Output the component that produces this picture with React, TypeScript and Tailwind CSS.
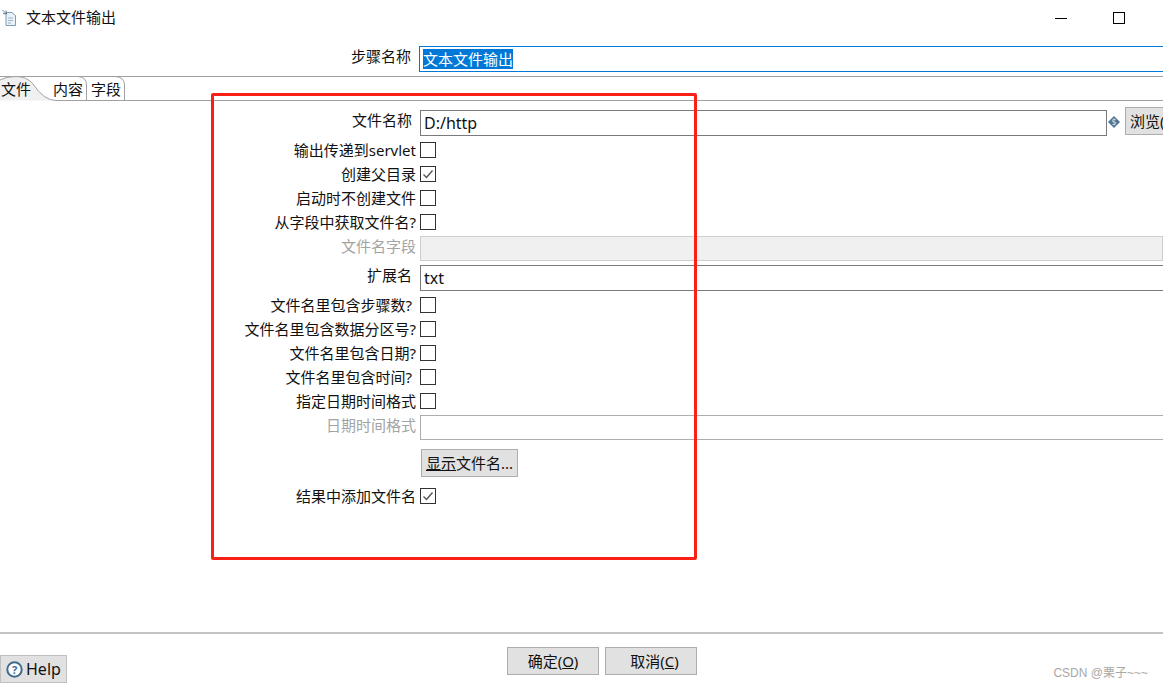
import React from "react";

const fontStack = "font-['Noto_Sans','Noto_Sans_CJK_SC',sans-serif]";

const Label = ({ text }: { text: string }) => (
  <span className="w-[416px] shrink-0 text-right text-[15px] leading-[24px] whitespace-nowrap text-[#111]">
    {text}
  </span>
);

const MutedLabel = ({ text }: { text: string }) => (
  <span className="w-[416px] shrink-0 text-right text-[15px] leading-[20px] whitespace-nowrap text-[#a3a3a3]">
    {text}
  </span>
);

const CheckRow = ({ label, checked }: { label: string; checked?: boolean }) => (
  <div className="flex h-[24px] items-center">
    <Label text={label} />
    <span className="ml-[4px] flex h-[16px] w-[16px] items-center justify-center border border-[#333] bg-white">
      {checked && (
        <svg width="14" height="14" viewBox="0 0 14 14" fill="none">
          <path d="M2.5 7.5 L5.5 10.5 L11.5 3.5" stroke="#555" strokeWidth="1.4" />
        </svg>
      )}
    </span>
  </div>
);

const PageIcon = () => (
  <svg width="16" height="18" viewBox="0 0 16 18" fill="none">
    <path d="M4 3.5 H10 L13.5 6.5 V16.5 H4 Z" fill="#eaf1f7" stroke="#7f9db5" />
    <path d="M6 9 H11 M6 11.5 H11 M6 14 H9" stroke="#9fb6c8" />
    <path d="M0.5 1 L4.5 5 M1 4.5 L4.5 5 L4 1.5" stroke="#5f7f98" strokeWidth="1" />
  </svg>
);

const App = () => {
  return (
    <div className={`relative flex h-[689px] w-[1163px] flex-col overflow-hidden bg-white text-[#111] ${fontStack}`}>
      {/* title bar */}
      <div className="flex h-[46px] shrink-0 items-start">
        <div className="ml-[2px] mt-[9px]">
          <PageIcon />
        </div>
        <span className="ml-[8px] mt-[6px] text-[15px] leading-[22px]">文本文件输出</span>
        <div className="ml-auto mr-[38px] mt-[12px] flex items-center gap-[46px]">
          <span className="h-[1px] w-[12px] bg-black" />
          <span className="h-[12px] w-[12px] border border-black" />
        </div>
      </div>

      {/* step name */}
      <div className="flex h-[26px] shrink-0">
        <span className="w-[411px] text-right text-[15px] leading-[21px]">步骤名称</span>
        <div className="ml-[8px] flex flex-1 items-center border-y border-l border-[#0078d7] pl-[3px]">
          <span className="bg-[#0078d7] text-[15px] leading-[20px] text-white">文本文件输出</span>
        </div>
      </div>

      {/* tabs */}
      <div className="relative mt-[4px] flex h-[25px] shrink-0 border-t border-[#a0a0a0]">
        <svg className="absolute left-0 top-[-1px]" width="1163" height="26" viewBox="0 0 1163 26" fill="none">
          <path d="M0 4 Q6 0.5 16 0.5 Q27 0.5 33 8 Q44 24.5 56 24.5 H0 Z" fill="#f0f0f0" />
          <path d="M0 4 Q6 0.5 16 0.5 Q27 0.5 33 8 Q44 24.5 56 24.5" stroke="#a0a0a0" />
          <path d="M56 24.5 H1163" stroke="#a0a0a0" />
          <path d="M78 0.5 Q86.5 1 86.5 9 V24" stroke="#a0a0a0" />
          <path d="M115 0.5 Q124.5 1 124.5 9 V24" stroke="#a0a0a0" />
        </svg>
        <span className="relative ml-[1px] mt-[1px] text-[15px] leading-[22px]">文件</span>
        <span className="relative ml-[22px] mt-[1px] text-[15px] leading-[22px]">内容</span>
        <span className="relative ml-[8px] mt-[1px] text-[15px] leading-[22px]">字段</span>
      </div>

      {/* form */}
      <div className="flex flex-1 flex-col pt-[9px]">
        <div className="flex h-[26px]">
          <span className="w-[412px] shrink-0 text-right text-[15px] leading-[21px]">文件名称</span>
          <div className="ml-[8px] flex h-[26px] w-[687px] shrink-0 items-center border border-[#7a7a7a] pl-[3px] text-[16px]">
            D:/http
          </div>
          <svg className="ml-[1px] mt-[6px] shrink-0" width="12" height="12" viewBox="0 0 12 12">
            <path d="M6 0 L12 6 L6 12 L0 6 Z" fill="#4f7596" />
            <text x="6" y="9" textAnchor="middle" fontSize="8" fill="#dfe8ef">$</text>
          </svg>
          <div className="ml-[5px] flex h-[28px] w-[60px] shrink-0 -translate-y-[3px] items-center border border-[#adadad] bg-[#e1e1e1] pl-[4px] text-[15px] whitespace-nowrap">
            浏览(B)...
          </div>
        </div>

        <div className="mt-[2px] flex flex-col">
          <CheckRow label="输出传递到servlet" />
          <CheckRow label="创建父目录" checked />
          <CheckRow label="启动时不创建文件" />
          <CheckRow label="从字段中获取文件名?" />
        </div>

        <div className="mt-[2px] flex h-[25px]">
          <MutedLabel text="文件名字段" />
          <div className="ml-[4px] flex-1 border border-[#cfcfcf] bg-[#f0f0f0]" />
        </div>

        <div className="mt-[4px] flex h-[26px]">
          <span className="w-[412px] shrink-0 text-right text-[15px] leading-[21px]">扩展名</span>
          <div className="ml-[8px] flex flex-1 items-center border-y border-l border-[#7a7a7a] pl-[3px] text-[16px]">
            txt
          </div>
        </div>

        <div className="mt-[2px] flex flex-col">
          <CheckRow label={"文件名里包含步骤数?\u00a0"} />
          <CheckRow label="文件名里包含数据分区号?" />
          <CheckRow label="文件名里包含日期?" />
          <CheckRow label={"文件名里包含时间?\u00a0"} />
          <CheckRow label="指定日期时间格式" />
        </div>

        <div className="mt-[2px] flex h-[25px]">
          <MutedLabel text="日期时间格式" />
          <div className="ml-[4px] flex-1 border-y border-l border-[#adadad]" />
        </div>

        <div className="mt-[9px] flex h-[28px] pl-[421px]">
          <div className="flex h-[28px] w-[97px] items-center border border-[#adadad] bg-[#e1e1e1] pl-[4px] text-[15px]">
            <span><span className="underline">显示</span>文件名...</span>
          </div>
        </div>

        <div className="mt-[7px]">
          <CheckRow label="结果中添加文件名" checked />
        </div>
      </div>

      {/* footer */}
      <div className="h-[57px] shrink-0 border-t-2 border-[#c4c4c4]">
        <div className="relative flex h-full">
          <div className="mt-[21px] flex h-[28px] w-[67px] items-center border border-[#c0c0c0] bg-[#e1e1e1] pl-[5px] text-[16px]">
            <svg width="17" height="17" viewBox="0 0 17 17" fill="none">
              <circle cx="8.5" cy="8.5" r="7.2" fill="#fff" stroke="#3f6b8f" strokeWidth="2" />
              <text x="8.5" y="12.5" textAnchor="middle" fontSize="11" fontWeight="700" fill="#3f6b8f">?</text>
            </svg>
            <span className="ml-[3px]">Help</span>
          </div>
          <div className="ml-[440px] mt-[13px] flex gap-[6px]">
            <div className="flex h-[28px] w-[92px] items-center justify-center border border-[#adadad] bg-[#e1e1e1] text-[15px]">
              <span>确定(<span className="underline">O</span>)</span>
            </div>
            <div className="flex h-[28px] w-[92px] items-center justify-center border border-[#adadad] bg-[#e1e1e1] pl-[7px] text-[15px]">
              <span>取消(<span className="underline">C</span>)</span>
            </div>
          </div>
          <span className="ml-auto mr-[15px] mt-[30px] font-['Liberation_Sans','Noto_Sans_CJK_SC',sans-serif] text-[12px] leading-[18px] text-[#a8a8a8]">
            CSDN @栗子~~~
          </span>
        </div>
      </div>

      {/* red annotation */}
      <div className="absolute left-[211px] top-[93px] h-[467px] w-[486px] rounded-[2px] border-[3px] border-[#fb2016]" />
    </div>
  );
};

export default App;
